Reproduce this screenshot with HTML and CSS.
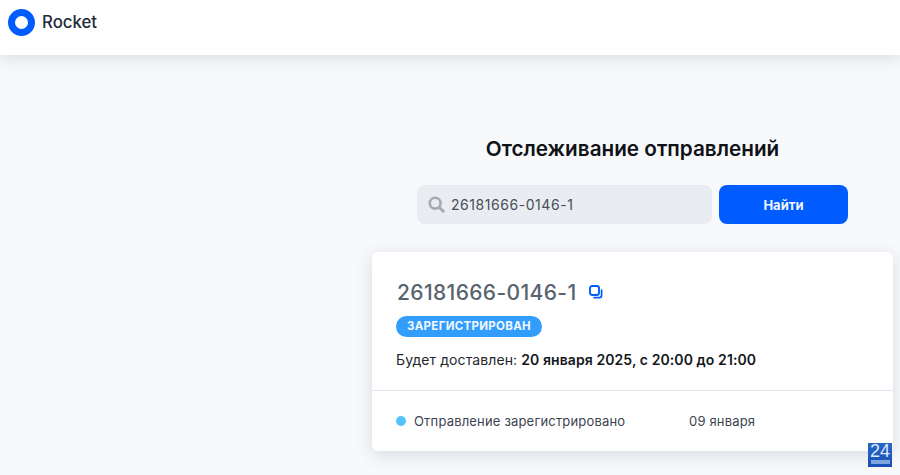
FILE: index.html
```html
<!DOCTYPE html>
<html lang="ru">
<head>
<meta charset="utf-8">
<title>Rocket</title>
<link rel="stylesheet" href="styles.css">
</head>
<body>
<header class="topbar">
  <span class="logo-ring"></span>
  <span class="brand">Rocket</span>
</header>
<main class="content">
  <h1 class="title">Отслеживание отправлений</h1>
  <form class="search">
    <div class="search-field">
      <svg class="search-icon" width="17" height="17" viewBox="0 0 17 17"><circle cx="7.2" cy="7.2" r="5.4" fill="none" stroke="#a5abb2" stroke-width="2.6"/><path d="M11.2 11.2l4 4" stroke="#a5abb2" stroke-width="3" stroke-linecap="round"/></svg>
      <span class="search-value">26181666-0146-1</span>
    </div>
    <button class="search-btn" type="button">Найти</button>
  </form>
  <section class="card">
    <div class="card-top">
      <div class="track-row">
        <span class="track">26181666-0146-1</span>
        <svg class="copy" width="14" height="14" viewBox="0 0 14 14" fill="none"><rect x="1" y="1" width="9" height="9" rx="2.2" stroke="#005cff" stroke-width="1.9"/><path d="M5 12.6h5.6a2 2 0 0 0 2-2V5" stroke="#005cff" stroke-width="1.7" stroke-linecap="round"/></svg>
      </div>
      <span class="badge">ЗАРЕГИСТРИРОВАН</span>
      <p class="delivery">Будет доставлен: <strong>20 января 2025, с 20:00 до 21:00</strong></p>
    </div>
    <div class="history">
      <span class="dot"></span>
      <span class="event">Отправление зарегистрировано</span>
      <span class="date">09 января</span>
    </div>
  </section>
</main>
<div class="widget"><span class="widget-num">24</span><span class="widget-bar"></span></div>
</body>
</html>
```
FILE: styles.css
```css
* { box-sizing: border-box; }
html, body { margin: 0; height: 475px; overflow: hidden; }
body {
  background: #f8f9fb;
  font-family: Inter, "Noto Sans", sans-serif;
  color: #1d2633;
  position: relative;
}
.topbar {
  height: 55px;
  background: #fff;
  box-shadow: 0 2px 16px rgba(30, 50, 80, 0.16);
  display: flex;
  align-items: flex-start;
  padding: 9px 0 0 8px;
  gap: 7px;
}
.logo-ring {
  width: 27px;
  height: 27px;
  border-radius: 50%;
  border: 7px solid #005cff;
  background: #fff;
}
.brand {
  font-size: 16.8px;
  font-weight: 500;
  line-height: 27px;
  color: #232c3a;
}
.content {
  width: 521px;
  margin-left: 372px;
  display: flex;
  flex-direction: column;
  padding-top: 81px;
}
.title {
  margin: 0;
  font-size: 20.7px;
  font-weight: 600;
  line-height: 26px;
  text-align: center;
  color: #0f1216;
}
.search {
  margin: 23px 45px 0 45px;
  display: flex;
  gap: 7px;
  height: 39px;
}
.search-field {
  width: 295px;
  background: #e9ecf1;
  border-radius: 8px;
  display: flex;
  align-items: center;
  padding-left: 11px;
  gap: 6px;
}
.search-value {
  font-size: 14px;
  letter-spacing: 0.55px;
  color: #4a4f57;
}
.search-btn {
  width: 129px;
  border: 0;
  border-radius: 8px;
  background: #005cff;
  color: #f2f6ff;
  font: 700 13px Inter, sans-serif;
}
.card {
  margin-top: 28px;
  height: 199px;
  background: #fff;
  border-radius: 6px;
  box-shadow: 0 4px 18px rgba(30, 50, 80, 0.15);
  display: flex;
  flex-direction: column;
}
.card-top {
  height: 139px;
  padding: 26px 25px 0 24px;
  border-bottom: 1px solid #e1e7ee;
}
.track-row {
  display: flex;
  align-items: center;
  gap: 13px;
  height: 28px;
  padding-left: 1px;
}
.track {
  font-size: 21px;
  font-weight: 500;
  color: #59636e;
  letter-spacing: 0.37px;
}
.badge {
  display: inline-block;
  margin-top: 10px;
  height: 21px;
  line-height: 21px;
  padding: 0 11px;
  border-radius: 11px;
  background: #339dfb;
  color: #f0f8ff;
  font-size: 11.5px;
  font-weight: 700;
  letter-spacing: 0.3px;
  vertical-align: top;
}
.delivery {
  margin: 13px 0 0;
  font-size: 14px;
  line-height: 20px;
  letter-spacing: 0.09px;
  color: #22272e;
}
.delivery strong { font-weight: 600; color: #14171b; }
.history {
  display: flex;
  align-items: center;
  padding: 0 0 0 24px;
  height: 60px;
  font-size: 13px;
  letter-spacing: 0.18px;
  color: #3c444f;
}
.dot {
  width: 10px;
  height: 10px;
  border-radius: 50%;
  background: #54c3fc;
  margin-right: 8px;
}
.event { width: 275px; }
.date { color: #3c444f; }
.widget {
  position: absolute;
  left: 868px;
  top: 443px;
  width: 24px;
  height: 24px;
  background: linear-gradient(#2767c8, #1a4fb5);
  display: flex;
  flex-direction: column;
  align-items: center;
}
.widget-num {
  font: 400 18px/17px "Liberation Sans", sans-serif;
  color: #dfe9f8;
  height: 16px;
}
.widget-bar {
  width: 19px;
  height: 4px;
  margin-top: 1px;
  background: #7fa3e0;
}
```
